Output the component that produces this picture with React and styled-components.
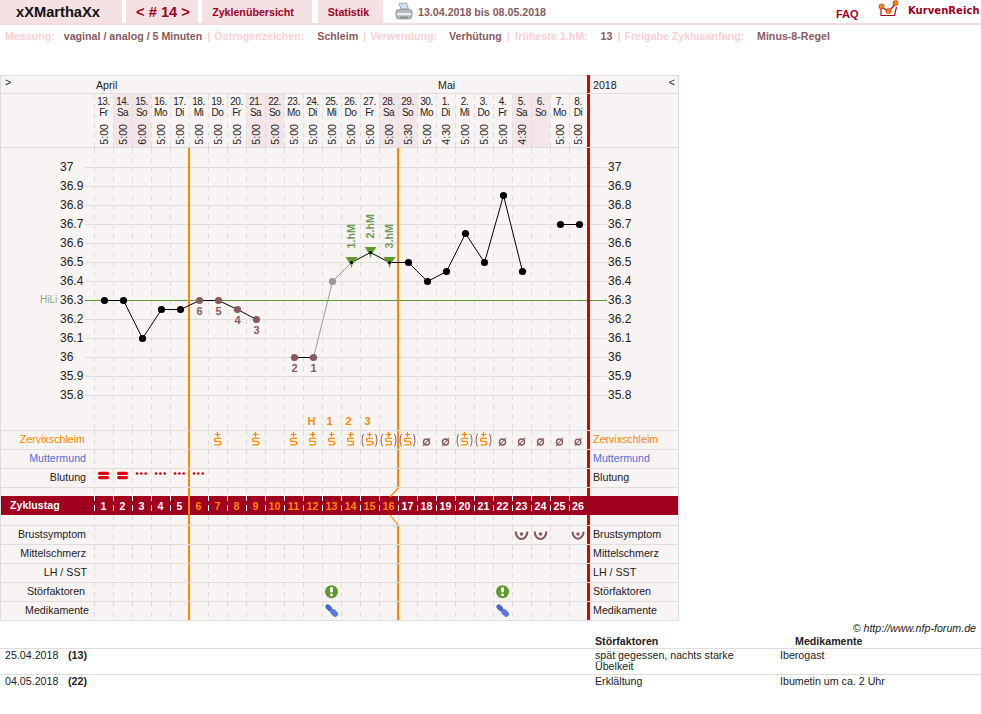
import styled, { createGlobalStyle } from "styled-components";

const GlobalStyle = createGlobalStyle`
  html, body {
    margin: 0;
    padding: 0;
    background: #fff;
    font-family: "Liberation Sans", Arial, sans-serif;
    font-size: 10.67px;
    color: #222;
  }
`;

const TAB_BG = "#f4e1e3";
const PAPER = "#f9f4f4";
const WEEKEND = "#f4e6e8";
const LINE = "#dfdcdc";
const MAROON = "#a0001e";
const ORANGE = "#ff8800";
const RED = "#dd0000";
const BROWN = "#875a60";
const GREEN = "#5f9a2f";
const BLUE = "#5570d8";

const DAYS = [
  ["13.", "Fr", "5:00"], ["14.", "Sa", "5:00"], ["15.", "So", "6:00"], ["16.", "Mo", "5:00"],
  ["17.", "Di", "5:00"], ["18.", "Mi", "5:00"], ["19.", "Do", "5:00"], ["20.", "Fr", "5:00"],
  ["21.", "Sa", "5:00"], ["22.", "So", "5:00"], ["23.", "Mo", "5:00"], ["24.", "Di", "5:00"],
  ["25.", "Mi", "5:00"], ["26.", "Do", "5:00"], ["27.", "Fr", "5:00"], ["28.", "Sa", "5:00"],
  ["29.", "So", "5:30"], ["30.", "Mo", "5:00"], ["1.", "Di", "4:30"], ["2.", "Mi", "5:00"],
  ["3.", "Do", "5:00"], ["4.", "Fr", "5:00"], ["5.", "Sa", "4:30"], ["6.", "So", ""],
  ["7.", "Mo", "5:00"], ["8.", "Di", "5:00"],
];

const TEMPS = [
  36.3, 36.3, 36.1, 36.25, 36.25, 36.3, 36.3, 36.25, 36.2, null, 36, 36, 36.4,
  36.5, 36.55, 36.5, 36.5, 36.4, 36.45, 36.65, 36.5, 36.85, 36.45, null, 36.7, 36.7,
];

const SCALE = [37, 36.9, 36.8, 36.7, 36.6, 36.5, 36.4, 36.3, 36.2, 36.1, 36, 35.9, 35.8];

const BELOW = { 5: "6", 6: "5", 7: "4", 8: "3", 10: "2", 11: "1" };
const HM = { 13: "1.hM", 14: "2.hM", 15: "3.hM" };
const PEAK = [
  [11, "H", 2],
  [12, "1", 3],
  [13, "2", 3],
  [14, "3", 3],
];

const MUCUS = {
  6: "s", 8: "s", 10: "s", 11: "s", 12: "s", 13: "s", 14: "p", 15: "p", 16: "p",
  17: "o", 18: "o", 19: "p", 20: "p", 21: "o", 22: "o", 23: "o", 24: "o", 25: "o",
};

const dayX = (i) => 104.5 + 19 * i;
const tempY = (t) => 300.5 - Math.round((t - 36.3) * 190);

const Page = styled.div`
  width: 981px;
  height: 714px;
  overflow: hidden;
`;

const TopBar = styled.div`
  display: flex;
  align-items: stretch;
  height: 23px;
  border-bottom: 2px solid #f4dcdf;
`;

const Tab = styled.div`
  display: flex;
  align-items: center;
  justify-content: center;
  box-sizing: border-box;
  width: ${(p) => p.$w}px;
  margin-right: ${(p) => p.$gap}px;
  padding-right: ${(p) => p.$pr || 0}px;
  background: ${TAB_BG};
  color: ${MAROON};
  font-weight: bold;
  font-size: 10.67px;
`;

const UserTab = styled(Tab)`
  color: #111;
  font-size: 14.67px;
`;

const CycleTab = styled(Tab)`
  font-size: 14.67px;
  padding-left: 2px;
`;

const PrintIcon = styled.svg`
  width: 20px;
  height: 20px;
  margin: 2px 4px 0 11px;
`;

const Period = styled.div`
  display: flex;
  align-items: center;
  font-weight: bold;
  font-size: 10.67px;
  color: ${BROWN};
  width: 418px;
`;

const Faq = styled.a`
  font-weight: bold;
  font-size: 11px;
  color: ${MAROON};
  width: 42px;
  padding-top: 8px;
  box-sizing: border-box;
`;

const Logo = styled.div`
  display: flex;
  align-items: flex-start;
  gap: 9px;
`;

const LogoText = styled.span`
  font-family: "DejaVu Sans", sans-serif;
  font-weight: bold;
  font-size: 10px;
  letter-spacing: 0.05px;
  color: ${MAROON};
  padding-top: 5px;
`;

const InfoLine = styled.div`
  display: flex;
  height: 50px;
  padding: 5px 0 0 5px;
  box-sizing: border-box;
  font-weight: bold;
  font-size: 10.67px;
  line-height: 12px;
  color: ${BROWN};
  white-space: pre;
`;

const InfoLabel = styled.span`
  color: #fbd0d4;
  margin-right: ${(p) => p.$gap}px;
`;

const InfoValue = styled.span`
  margin-right: 5px;
`;

const Board = styled.div`
  width: 677px;
  background: ${PAPER};
  border: 1px solid ${LINE};
  border-bottom: none;
`;

const Row = styled.div`
  display: grid;
  grid-template-columns: 93px repeat(25, 19px) 18px 91px;
  height: ${(p) => p.$h}px;
  border-bottom: ${(p) => (p.$flat ? "none" : `1px solid ${LINE}`)};
  background: ${(p) => p.$bg || "transparent"};
`;

const ChartRow = styled.div`
  height: 282px;
  border-bottom: 1px solid ${LINE};
`;

const MonthRow = styled.div`
  display: flex;
  height: 17px;
  border-bottom: 1px solid ${LINE};
  line-height: 18px;
`;

const MonthArrow = styled.span`
  width: 95px;
  padding-left: 4px;
  box-sizing: border-box;
  line-height: 13px;
`;

const MonthName = styled.span`
  width: ${(p) => p.$w}px;
`;

const YearCell = styled.div`
  display: flex;
  justify-content: space-between;
  flex: 1;
  border-left: 3px solid ${RED};
  padding: 1px 3px 0;
  margin-top: -1px;
`;

const YearArrow = styled.span`
  line-height: 13px;
`;

const Label = styled.div`
  text-align: right;
  padding-right: ${(p) => p.$pr ?? 8}px;
  color: ${(p) => p.$color || "#222"};
  line-height: 16px;
  white-space: nowrap;
`;

const SideCell = styled.div`
  border-left: 3px solid ${RED};
  padding-left: 3px;
  color: ${(p) => p.$color || "#222"};
  line-height: 16px;
  white-space: nowrap;
`;

const dash = (c) =>
  `repeating-linear-gradient(to bottom, ${c} 0, ${c} 5px, transparent 5px, transparent 9.5px)`;

// one cell below a day: dashed left edge, or the solid orange line
const Day = styled.div`
  position: relative;
  display: flex;
  align-items: center;
  justify-content: center;
  background-image: ${(p) => (p.$fert ? "none" : dash(p.$dash || LINE))};
  background-size: 1px 100%;
  background-repeat: no-repeat;
  &::before {
    content: "";
    display: ${(p) => (p.$fert ? "block" : "none")};
    position: absolute;
    left: 0;
    top: 0;
    bottom: 0;
    width: 2px;
    margin-left: -1px;
    background: ${ORANGE};
  }
`;

const HeaderDay = styled(Day)`
  flex-direction: column;
  justify-content: flex-start;
  background-color: ${(p) => (p.$weekend ? WEEKEND : "transparent")};
  font-size: 10px;
  line-height: 10.5px;
  padding-top: 3px;
  box-sizing: border-box;
`;

const HeaderDate = styled.span`
  letter-spacing: -0.5px;
`;

const Time = styled.span`
  writing-mode: vertical-rl;
  transform: rotate(180deg);
  font-size: 10.67px;
  line-height: 12px;
  margin-top: 6px;
`;

const CycleDay = styled(Day)`
  color: ${(p) => (p.$hot ? ORANGE : "#fff")};
  font-weight: bold;
`;

const BarTitle = styled.div`
  color: #fff;
  font-weight: bold;
  line-height: 19px;
  padding-left: 9px;
`;

const Shift = styled.svg`
  position: absolute;
  left: -8px;
  top: 0;
  width: 9px;
  height: 10px;
  overflow: visible;
`;

const ChartSvg = styled.svg`
  display: block;
  font-family: "Liberation Sans", Arial, sans-serif;
`;

const Copyright = styled.div`
  width: 976px;
  text-align: right;
  font-style: italic;
  line-height: 13px;
  margin-top: 1px;
`;

const NoteHead = styled.div`
  display: grid;
  grid-template-columns: 595px 200px 1fr;
  font-weight: bold;
  line-height: 13px;
  height: 13px;
  border-bottom: 1px solid ${LINE};
`;

const NoteRow = styled.div`
  display: grid;
  grid-template-columns: 63px 527px 185px 1fr;
  min-height: ${(p) => p.$h}px;
  padding: 1px 0 0 5px;
  box-sizing: border-box;
  line-height: 11px;
  border-bottom: ${(p) => (p.$last ? "none" : `1px solid ${LINE}`)};
`;

const NoteCycle = styled.span`
  font-weight: bold;
`;

const NoteText = styled.span`
  width: 150px;
`;

const CellIcon = styled.svg`
  display: block;
`;

const MucusIcon = ({ kind }) => {
  if (kind === "o") {
    return (
      <CellIcon width="19" height="18" viewBox="0 0 19 18">
        <circle cx="9.5" cy="11" r="3" fill="none" stroke={BROWN} strokeWidth="1.4" />
        <line x1="6" y1="15" x2="13" y2="7" stroke={BROWN} strokeWidth="1.1" />
      </CellIcon>
    );
  }
  return (
    <CellIcon width="19" height="18" viewBox="0 0 19 18">
      <g stroke={ORANGE} strokeWidth="1.2" fill="none">
        <line x1="7" y1="3.5" x2="12" y2="3.5" />
        <line x1="9.5" y1="1" x2="9.5" y2="6" />
        <path d="M12.8 7.4H7.5Q6.6 7.4 6.6 8.3V9.4Q6.6 10.4 7.5 10.4H11.5Q12.4 10.4 12.4 11.3V12.7Q12.4 13.8 11.5 13.8H6.3" />
      </g>
      {kind === "p" && (
        <g stroke={BROWN} strokeWidth="1" fill="none">
          <path d="M3.6 3C1.6 6.5 1.6 12 3.6 15.5" />
          <path d="M15.4 3C17.4 6.5 17.4 12 15.4 15.5" />
        </g>
      )}
    </CellIcon>
  );
};

const BleedHeavy = () => (
  <CellIcon width="19" height="18" viewBox="0 0 19 18">
    <rect x="4" y="2.7" width="11" height="3.3" rx="1.6" fill="#e00010" />
    <rect x="4" y="7" width="11" height="3.2" rx="1.6" fill="#e00010" />
  </CellIcon>
);

const BleedLight = () => (
  <CellIcon width="19" height="18" viewBox="0 0 19 18">
    <circle cx="5" cy="4.5" r="1.3" fill="#d00010" />
    <circle cx="9.3" cy="4.5" r="1.3" fill="#d00010" />
    <circle cx="13.7" cy="4.5" r="1.3" fill="#d00010" />
  </CellIcon>
);

const BreastIcon = () => (
  <CellIcon width="19" height="18" viewBox="0 0 19 18">
    <path d="M3.7 5.5A5.8 7.5 0 0 0 15.3 5.5" fill="none" stroke={BROWN} strokeWidth="2.2" />
    <circle cx="9.5" cy="8" r="1.8" fill={BROWN} />
  </CellIcon>
);

const AlertIcon = () => (
  <CellIcon width="19" height="18" viewBox="0 0 19 18">
    <circle cx="9.5" cy="8.7" r="6.5" fill={GREEN} />
    <rect x="8" y="4" width="3" height="5.5" rx="1.5" fill="#fff" />
    <circle cx="9.5" cy="11.9" r="1.4" fill="#fff" />
  </CellIcon>
);

const PillIcon = () => (
  <CellIcon width="19" height="18" viewBox="0 0 19 18">
    <line x1="5.8" y1="4.8" x2="7.8" y2="6.7" stroke="#4a68d0" strokeWidth="5" strokeLinecap="round" />
    <line x1="11" y1="9.9" x2="13.2" y2="12" stroke="#5a78e0" strokeWidth="5.6" strokeLinecap="round" />
  </CellIcon>
);

const TriggerRow = ({ label, color, pr, icons = {} }) => (
  <Row $h={18}>
    <Label $color={color} $pr={pr}>{label}</Label>
    {DAYS.map((d, i) => (
      <Day key={i} $fert={i === 5 || i === 16}>
        {icons[i]}
      </Day>
    ))}
    <SideCell $color={color}>{label}</SideCell>
  </Row>
);

const iconMap = (days, node) => Object.fromEntries(days.map((d) => [d, node]));

const Chart = () => {
  const segs = [];
  for (let i = 0; i < TEMPS.length - 1; i++) {
    if (TEMPS[i] == null || TEMPS[i + 1] == null) continue;
    const grey = i === 11 || i === 12;
    segs.push(
      <line
        key={i}
        x1={dayX(i)}
        y1={tempY(TEMPS[i])}
        x2={dayX(i + 1)}
        y2={tempY(TEMPS[i + 1])}
        stroke={grey ? "#999" : "#000"}
        strokeWidth="1"
      />
    );
  }
  return (
    <ChartSvg width="677" height="282" viewBox="1 148 677 282">
      {DAYS.map((d, i) =>
        i === 5 || i === 16 ? null : (
          <line
            key={i}
            x1={94.5 + 19 * i}
            x2={94.5 + 19 * i}
            y1="148"
            y2="430"
            stroke={LINE}
            strokeDasharray="5 4.5"
          />
        )
      )}
      {SCALE.map((t) => (
        <g key={t}>
          <line x1="85" x2="607" y1={tempY(t)} y2={tempY(t)} stroke={t === 36.3 ? GREEN : LINE} />
          <text x="60" y={tempY(t) + 3.5} fontSize="12" fill="#222">{t}</text>
          <text x="608" y={tempY(t) + 3.5} fontSize="12" fill="#222">{t}</text>
        </g>
      ))}
      <text x="40" y="303" fontSize="10" fill="#8aa97a">HiLi</text>
      <rect x="188" y="148" width="2" height="282" fill={ORANGE} />
      <rect x="397" y="148" width="2" height="282" fill={ORANGE} />
      <rect x="587" y="148" width="3" height="282" fill={RED} />
      {segs}
      {TEMPS.map((t, i) => {
        if (t == null) return null;
        const x = dayX(i);
        const y = tempY(t);
        if (HM[i]) {
          return (
            <g key={i}>
              <path d={`M${x - 6} ${y - 5.5}H${x + 6}L${x + 1} ${y + 2}L${x} ${y + 6}L${x - 1} ${y + 2}Z`} fill={GREEN} />
              <circle cx={x} cy={y} r="1.5" fill="#000" />
              <text
                transform={`translate(${x + 3} ${y - 14}) rotate(-90)`}
                fontSize="10.67"
                fontWeight="bold"
                fill="#6f9a55"
              >
                {HM[i]}
              </text>
            </g>
          );
        }
        const brown = BELOW[i] != null;
        return (
          <g key={i}>
            <circle cx={x} cy={y} r="3.6" fill={i === 12 ? "#999" : brown ? BROWN : "#000"} />
            {brown && (
              <text x={x} y={y + 14} textAnchor="middle" fontSize="11" fontWeight="bold" fill={BROWN}>
                {BELOW[i]}
              </text>
            )}
          </g>
        );
      })}
      {PEAK.map(([i, txt, nudge]) => (
        <text key={i} x={dayX(i) - nudge} y="425" textAnchor="middle" fontSize="11" fontWeight="bold" fill={ORANGE}>
          {txt}
        </text>
      ))}
    </ChartSvg>
  );
};

const App = () => {
  const mucus = Object.fromEntries(
    Object.entries(MUCUS).map(([i, k]) => [i, <MucusIcon kind={k} />])
  );
  const bleed = {
    ...iconMap([0, 1], <BleedHeavy />),
    ...iconMap([2, 3, 4, 5], <BleedLight />),
  };

  return (
    <Page>
      <GlobalStyle />
      <TopBar>
        <UserTab $w={122} $gap={4} $pr={6}>xXMarthaXx</UserTab>
        <CycleTab $w={72} $gap={4}>{"< # 14 >"}</CycleTab>
        <Tab $w={110} $gap={6} $pr={8}>Zyklenübersicht</Tab>
        <Tab $w={65} $gap={0} $pr={4}>Statistik</Tab>
        <PrintIcon viewBox="0 0 20 20">
          <path d="M5 1.5L12.5 1l2 6H7z" fill="#cfe0ee" stroke="#8a97a5" strokeWidth="0.8" />
          <path d="M2 9.5Q2 7.5 5 7.5H15Q18 7.5 18 9.5V14Q18 17 15 17H5Q2 17 2 14Z" fill="#b5b9bd" stroke="#80868c" strokeWidth="0.7" />
          <rect x="3" y="11" width="14" height="2.2" fill="#eceeef" />
          <rect x="6" y="14.5" width="8" height="2" fill="#8b9096" />
        </PrintIcon>
        <Period>13.04.2018 bis 08.05.2018</Period>
        <Faq>FAQ</Faq>
        <Logo>
          <svg width="21" height="20" viewBox="0 0 21 20">
            <path d="M3 6.5V15.5H16.5L18.5 7" fill="none" stroke={MAROON} strokeWidth="1.1" />
            <path d="M3 6.5L10.5 11.5L18.5 3" fill="none" stroke={MAROON} strokeWidth="1.1" />
            <circle cx="3.5" cy="6.5" r="2.6" fill={ORANGE} stroke={MAROON} strokeWidth="0.5" />
            <circle cx="10.5" cy="11" r="2.6" fill={ORANGE} stroke={MAROON} strokeWidth="0.5" />
            <circle cx="17.5" cy="3" r="2.6" fill={ORANGE} stroke={MAROON} strokeWidth="0.5" />
          </svg>
          <LogoText>KurvenReich</LogoText>
        </Logo>
      </TopBar>

      <InfoLine>
        <InfoLabel $gap={9}>Messung:</InfoLabel>
        <InfoValue>vaginal / analog / 5 Minuten</InfoValue>
        <InfoLabel $gap={4}>|</InfoLabel>
        <InfoLabel $gap={13}>Östrogenzeichen:</InfoLabel>
        <InfoValue>Schleim</InfoValue>
        <InfoLabel $gap={4}>|</InfoLabel>
        <InfoLabel $gap={12}>Verwendung:</InfoLabel>
        <InfoValue>Verhütung</InfoValue>
        <InfoLabel $gap={5}>|</InfoLabel>
        <InfoLabel $gap={13}>früheste 1.hM:</InfoLabel>
        <InfoValue>13</InfoValue>
        <InfoLabel $gap={4}>|</InfoLabel>
        <InfoLabel $gap={13}>Freigabe Zyklusanfang:</InfoLabel>
        <InfoValue>Minus-8-Regel</InfoValue>
      </InfoLine>

      <Board>
        <MonthRow>
          <MonthArrow>&gt;</MonthArrow>
          <MonthName $w={342}>April</MonthName>
          <MonthName $w={149}>Mai</MonthName>
          <YearCell>
            2018
            <YearArrow>&lt;</YearArrow>
          </YearCell>
        </MonthRow>

        <Row $h={53}>
          <Label />
          {DAYS.map((d, i) => (
            <HeaderDay key={i} $weekend={d[1] === "Sa" || d[1] === "So"}>
              <HeaderDate>{d[0]}</HeaderDate>
              <HeaderDate>{d[1]}</HeaderDate>
              <Time>{d[2]}</Time>
            </HeaderDay>
          ))}
          <SideCell />
        </Row>

        <ChartRow>
          <Chart />
        </ChartRow>

        <TriggerRow label="Zervixschleim" color={ORANGE} pr={9} icons={mucus} />
        <TriggerRow label="Muttermund" color={BLUE} />
        <TriggerRow label="Blutung" icons={bleed} />

        <Row $h={8} $flat>
          <Label />
          {DAYS.map((d, i) => (
            <Day key={i} $fert={i === 5}>
              {i === 16 && (
                <Shift viewBox="0 0 9 10">
                  <line x1="8" y1="0" x2="0" y2="9" stroke={ORANGE} strokeWidth="1.2" />
                </Shift>
              )}
            </Day>
          ))}
          <SideCell />
        </Row>

        <Row $h={19} $flat $bg={MAROON}>
          <BarTitle>Zyklustag</BarTitle>
          {DAYS.map((d, i) => (
            <CycleDay key={i} $dash="#fff" $fert={i === 5} $hot={i >= 5 && i <= 15}>{i + 1}</CycleDay>
          ))}
          <div />
        </Row>

        <Row $h={10}>
          <Label />
          {DAYS.map((d, i) => (
            <Day key={i} $fert={i === 5}>
              {i === 16 && (
                <Shift viewBox="0 0 9 10">
                  <line x1="0" y1="0" x2="8" y2="10" stroke={ORANGE} strokeWidth="1.2" />
                </Shift>
              )}
            </Day>
          ))}
          <SideCell />
        </Row>

        <TriggerRow label="Brustsymptom" icons={iconMap([22, 23, 25], <BreastIcon />)} />
        <TriggerRow label="Mittelschmerz" />
        <TriggerRow label="LH / SST" pr={7} />
        <TriggerRow label="Störfaktoren" pr={9} icons={iconMap([12, 21], <AlertIcon />)} />
        <TriggerRow label="Medikamente" pr={5} icons={iconMap([12, 21], <PillIcon />)} />
      </Board>

      <Copyright>© http://www.nfp-forum.de</Copyright>
      <NoteHead>
        <span />
        <span>Störfaktoren</span>
        <span>Medikamente</span>
      </NoteHead>
      <NoteRow $h={26}>
        <span>25.04.2018</span>
        <span><NoteCycle>(13)</NoteCycle></span>
        <NoteText>spät gegessen, nachts starke Übelkeit</NoteText>
        <span>Iberogast</span>
      </NoteRow>
      <NoteRow $h={20} $last>
        <span>04.05.2018</span>
        <span><NoteCycle>(22)</NoteCycle></span>
        <NoteText>Erklältung</NoteText>
        <span>Ibumetin um ca. 2 Uhr</span>
      </NoteRow>
    </Page>
  );
};

export default App;
